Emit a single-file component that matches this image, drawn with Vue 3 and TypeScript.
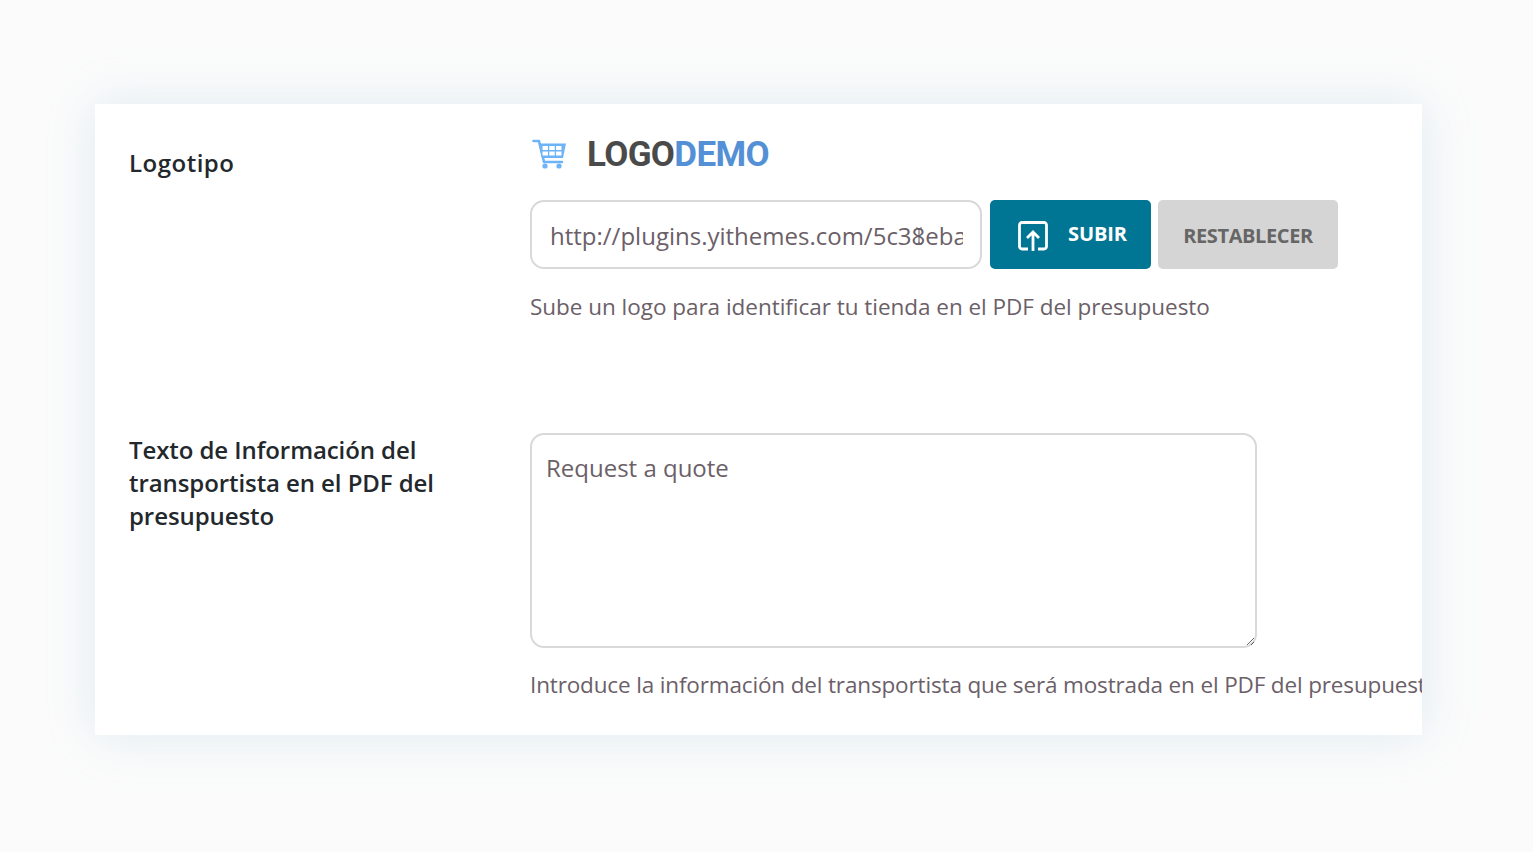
<script setup lang="ts">
const url = 'http://plugins.yithemes.com/5c38ebaf1d2e4a.png'
const cells = [10.500, 17.250, 24].flatMap((x) => [7, 12.500].map((y) => ({ x, y })))
</script>

<template>
  <main class="page">
    <section class="card">
      <div class="row first">
        <h2 class="label">Logotipo</h2>
        <div class="field">
          <div class="logo">
            <svg class="cart" viewBox="0 0 34 30" fill="none">
              <path d="M1.500 2H7l5 21h18" stroke="#6db3f7" stroke-width="2.600" stroke-linecap="round" stroke-linejoin="round" />
              <path d="M6.500 4.500H34l-3 14.500H10z" fill="#6db3f7" />
              <rect v-for="c in cells" :key="`${c.x}-${c.y}`" :x="c.x" :y="c.y" width="5.500" height="4" fill="#fff" />
              <circle cx="13" cy="27" r="2.600" fill="#6db3f7" />
              <circle cx="27" cy="27" r="2.600" fill="#6db3f7" />
            </svg>
            <span class="word"><span class="dark">LOGO</span><span class="blue">DEMO</span></span>
          </div>
          <div class="controls">
            <div class="url-wrap">
              <input class="url" type="text" :value="url" />
              <svg class="ibeam" viewBox="0 0 8 18" fill="none" stroke="#5b5560" stroke-width="1">
                <path d="M1 1c2 0 3 .5 3 2v12c0 1.500-1 2-3 2M7 1c-2 0-3 .5-3 2M7 17c-2 0-3-.5-3-2" />
              </svg>
            </div>
            <button class="btn upload" type="button">
              <svg class="up" viewBox="0 0 30 30" fill="none" stroke="#fff" stroke-width="2.800">
                <path d="M10 28H4a2.500 2.500 0 0 1-2.500-2.500V4A2.500 2.500 0 0 1 4 1.500h22A2.500 2.500 0 0 1 28.500 4v21.500A2.500 2.500 0 0 1 26 28h-6" />
                <path d="M15 30V11M9 17l6-6 6 6" />
              </svg>
              <span class="up-text">SUBIR</span>
            </button>
            <button class="btn reset" type="button">RESTABLECER</button>
          </div>
          <p class="hint">Sube un logo para identificar tu tienda en el PDF del presupuesto</p>
        </div>
      </div>
      <div class="row second">
        <h2 class="label">Texto de Información del transportista en el PDF del presupuesto</h2>
        <div class="field">
          <textarea class="area" placeholder="Request a quote"></textarea>
          <p class="hint nowrap">Introduce la información del transportista que será mostrada en el PDF del presupuesto</p>
        </div>
      </div>
    </section>
  </main>
</template>

<style scoped>
.page {
  box-sizing: border-box;
  width: 1533px;
  height: 852px;
  padding: 104px 111px 117px 95px;
  background: #fbfbfb;
  font-family: "Open Sans", "Noto Sans", sans-serif;
}
.card {
  box-sizing: border-box;
  height: 631px;
  padding: 30px 0 0 34px;
  background: #fff;
  overflow: hidden;
  box-shadow: 0 0 45px rgba(185, 215, 230, 0.42);
}
.row {
  display: grid;
  grid-template-columns: 401px 1fr;
}
.first {
  height: 299px;
}
.label {
  margin: 0;
  width: 330px;
  font-size: 24px;
  line-height: 33px;
  font-weight: 600;
  color: #23282d;
  letter-spacing: -0.08px;
}
.first .label {
  margin-top: 12px;
  letter-spacing: 0.5px;
}
.logo {
  display: flex;
  align-items: center;
  height: 40px;
  margin-bottom: 26px;
  padding-left: 2px;
}
.cart {
  width: 34px;
  height: 30px;
}
.word {
  margin-left: 21px;
  font-family: Roboto, sans-serif;
  font-size: 35px;
  font-weight: 700;
  letter-spacing: -0.65px;
}
.dark { color: #4a4a4a; }
.blue { color: #5490d6; }
.controls {
  display: flex;
  gap: 8px;
  height: 69px;
}
.url-wrap {
  position: relative;
  width: 452px;
  height: 69px;
}
.url {
  box-sizing: border-box;
  width: 452px;
  height: 69px;
  padding: 1px 17px 0 18px;
  border: 2px solid #d9d9d9;
  border-radius: 14px;
  outline: none;
  font: 24px "Open Sans", sans-serif;
  color: #6b6068;
}
.ibeam {
  position: absolute;
  left: 385px;
  top: 27px;
  width: 8px;
  height: 18px;
}
.btn {
  height: 69px;
  border: 0;
  border-radius: 5px;
  font-family: "Open Sans", sans-serif;
  font-size: 20px;
  font-weight: 700;
}
.upload {
  display: flex;
  align-items: center;
  width: 161px;
  padding: 0 0 0 28px;
  gap: 20px;
  background: #007694;
  color: #fff;
}
.up {
  width: 30px;
  height: 30px;
  margin-top: 2px;
}
.up-text {
  margin-top: -2px;
  letter-spacing: -0.1px;
}
.reset {
  width: 180px;
  margin-left: -1px;
  padding: 2px 0 0;
  background: #d5d5d5;
  color: #666;
  letter-spacing: -0.4px;
}
.hint {
  margin: 22px 0 0;
  font-size: 22.500px;
  line-height: 32px;
  color: #6b6068;
  letter-spacing: -0.03px;
}
.nowrap {
  margin-top: 21px;
  white-space: nowrap;
  letter-spacing: -0.15px;
}
.area {
  display: block;
  box-sizing: border-box;
  width: 727px;
  height: 215px;
  padding: 15px 14px;
  border: 2px solid #d9d9d9;
  border-radius: 14px;
  outline: none;
  font: 24px/36px "Open Sans", sans-serif;
  color: #6b6068;
}
.area::placeholder {
  color: #6b6068;
  opacity: 1;
}
</style>
